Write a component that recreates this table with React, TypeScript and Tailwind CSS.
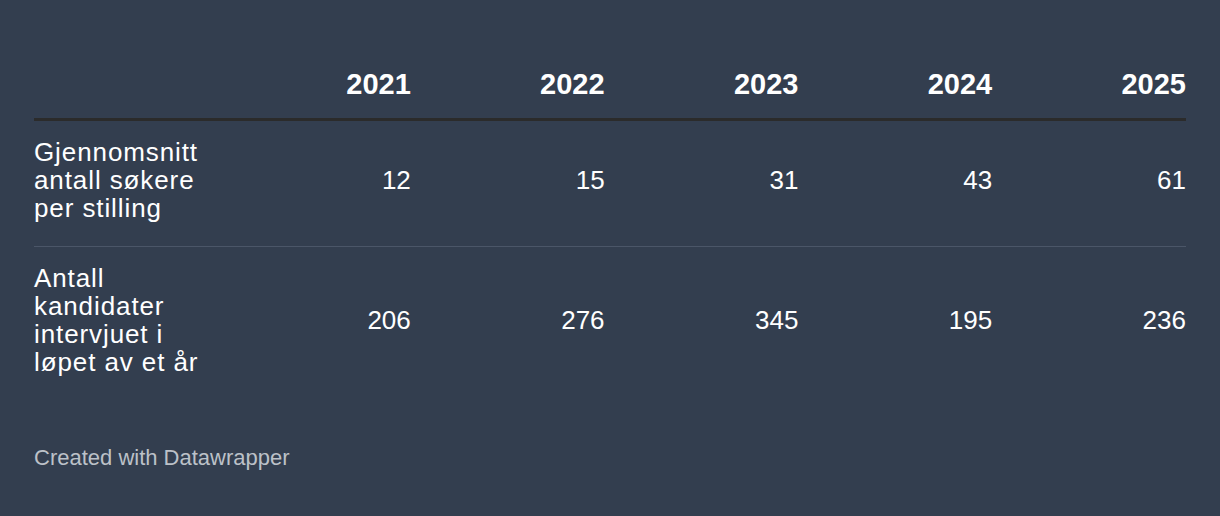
import React from 'react';

const years = ['2021', '2022', '2023', '2024', '2025'];

const rows = [
  {
    label: ['Gjennomsnitt', 'antall søkere', 'per stilling'],
    values: ['12', '15', '31', '43', '61'],
  },
  {
    label: ['Antall', 'kandidater', 'intervjuet i', 'løpet av et år'],
    values: ['206', '276', '345', '195', '236'],
  },
];

export default function App() {
  return (
    <div
      className="w-[1220px] h-[516px] bg-[#333e4f] text-white px-[34px] pt-[68px]"
      style={{ fontFamily: '"Liberation Sans", Arial, sans-serif' }}
    >
      {/* Header */}
      <div className="grid grid-cols-[183px_repeat(5,1fr)] items-end pb-[18px] border-b-[3px] border-[#2b2b2b]">
        <div />
        {years.map((y) => (
          <div key={y} className="text-right text-[29px] leading-[32px] font-bold">
            {y}
          </div>
        ))}
      </div>

      {/* Body */}
      {rows.map((r, i) => (
        <div
          key={i}
          className={`grid grid-cols-[183px_repeat(5,1fr)] items-center pt-[17px] pb-[24px] ${
            i < rows.length - 1 ? 'border-b border-[#4b5668]' : ''
          }`}
        >
          <div className="text-[26px] leading-[28px] tracking-[0.9px]">
            {r.label.map((l, j) => (
              <div key={j} className="whitespace-nowrap">{l}</div>
            ))}
          </div>
          {r.values.map((v, j) => (
            <div key={j} className="text-right text-[26px] leading-[28px]">
              {v}
            </div>
          ))}
        </div>
      ))}

      {/* Footer */}
      <div className="mt-[45px] text-[22px] leading-[26px] text-[#bcc1c8]">
        Created with Datawrapper
      </div>
    </div>
  );
}
